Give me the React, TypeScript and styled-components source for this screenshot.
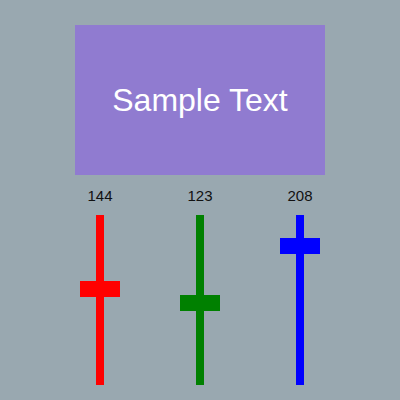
import React from "react";
import styled, { createGlobalStyle } from "styled-components";

const Global = createGlobalStyle`
  html, body { margin: 0; padding: 0; background: #99a8b0; }
  body { font-family: "Liberation Sans", Arial, sans-serif; }
`;

const Page = styled.div`
  width: 400px;
  height: 400px;
  display: flex;
  flex-direction: column;
  align-items: center;
  padding-top: 25px;
  box-sizing: border-box;
  background: #99a8b0;
`;

const Preview = styled.div<{ $bg: string }>`
  width: 250px;
  height: 150px;
  background: ${(p) => p.$bg};
  display: flex;
  align-items: center;
  justify-content: center;
  color: #ffffff;
  font-size: 32px;
`;

const SliderRow = styled.div`
  display: flex;
  width: 300px;
  margin-top: 12px;
`;

const SliderCol = styled.div`
  width: 100px;
  display: flex;
  flex-direction: column;
  align-items: center;
`;

const Label = styled.div`
  font-size: 15px;
  line-height: 17px;
  color: #111;
  height: 17px;
`;

const Track = styled.div<{ $color: string }>`
  position: relative;
  margin-top: 11px;
  width: 8px;
  height: 170px;
  background: ${(p) => p.$color};
`;

const Thumb = styled.div<{ $color: string }>`
  position: absolute;
  left: -16px;
  width: 40px;
  height: 16px;
  background: ${(p) => p.$color};
`;

const channels = [
  { value: 144, color: "#ff0000" },
  { value: 123, color: "#008000" },
  { value: 208, color: "#0000ff" },
];

export default function App() {
  const [r, g, b] = channels.map((c) => c.value);
  return (
    <>
      <Global />
      <Page>
        <Preview $bg={`rgb(${r}, ${g}, ${b})`}>Sample Text</Preview>
        <SliderRow>
          {channels.map((c) => (
            <SliderCol key={c.color}>
              <Label>{c.value}</Label>
              <Track $color={c.color}>
                <Thumb
                  $color={c.color}
                  style={{ top: 170 - (c.value / 255) * 170 - 8 }}
                />
              </Track>
            </SliderCol>
          ))}
        </SliderRow>
      </Page>
    </>
  );
}
